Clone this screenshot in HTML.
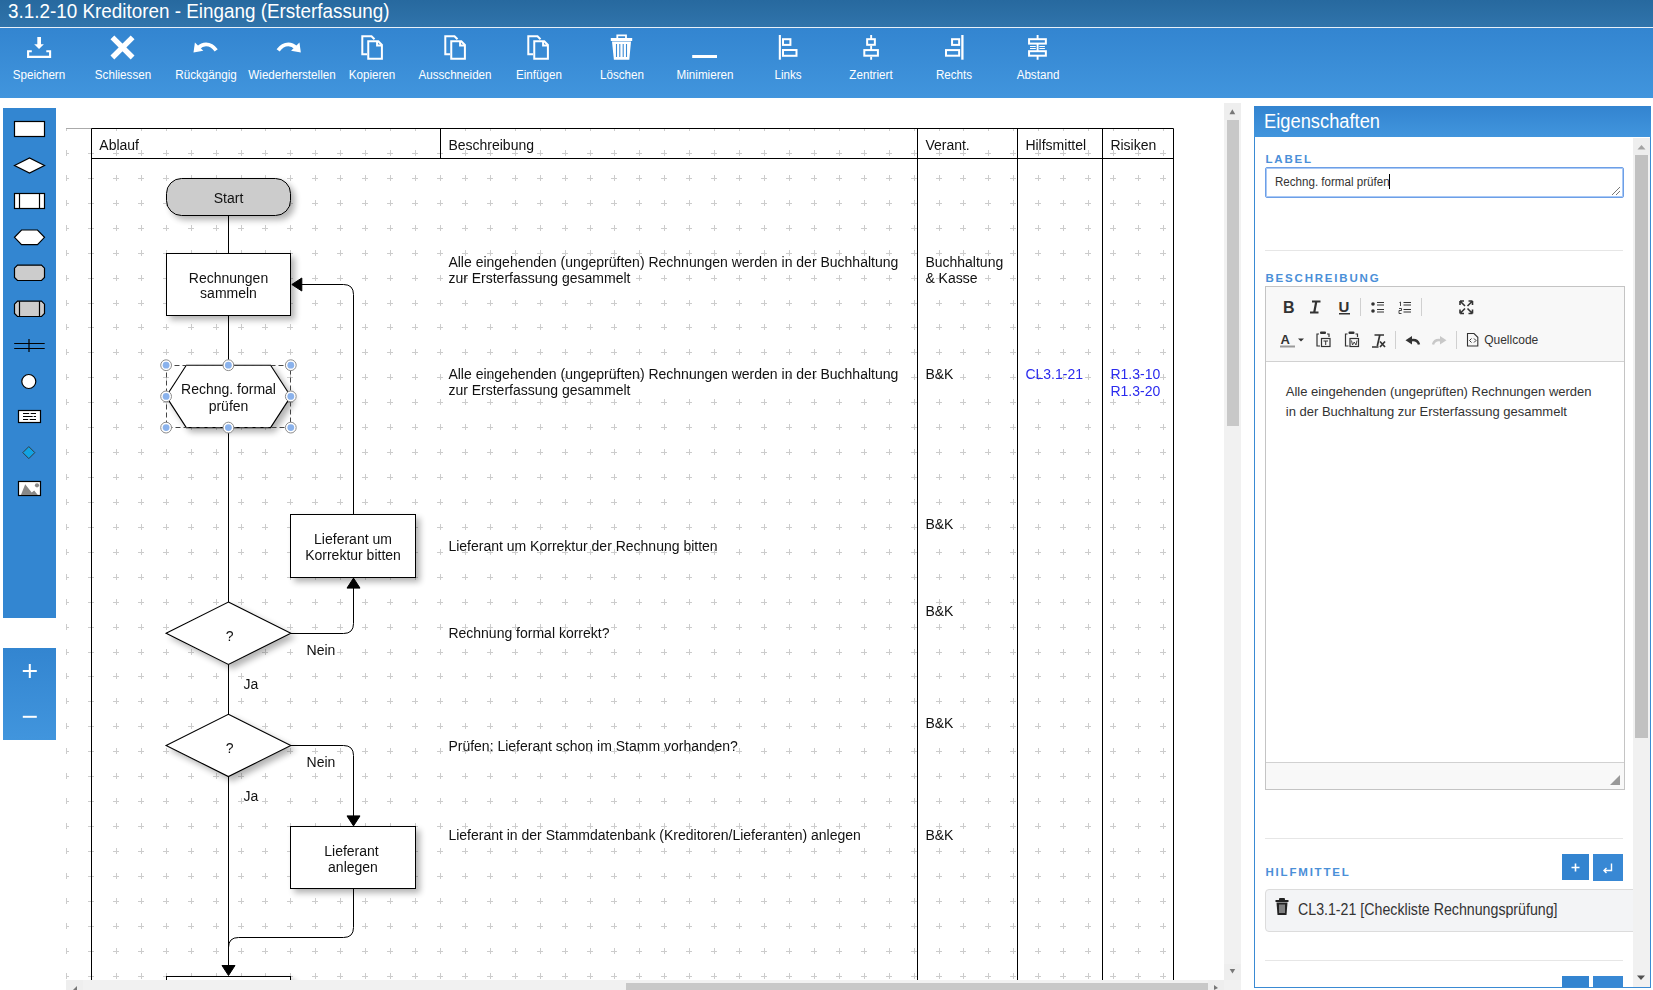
<!DOCTYPE html>
<html><head><meta charset="utf-8">
<style>
html,body{margin:0;padding:0}
body{width:1653px;height:990px;overflow:hidden;position:relative;background:#fff;font-family:"Liberation Sans",sans-serif}
.abs{position:absolute}
#title{left:0;top:0;width:1653px;height:27px;background:linear-gradient(#27699f,#3074ab)}
#title span{position:absolute;left:8px;top:-1px;font-size:20.5px;color:#fff;white-space:nowrap;transform-origin:0 0;transform:scaleX(0.92);line-height:24px}
#tbline{left:0;top:27px;width:1653px;height:1px;background:#e8f0f8}
#toolbar{left:0;top:28px;width:1653px;height:70px;background:linear-gradient(#3385d0,#4195dd)}
.tl{position:absolute;top:40px;font-size:12px;color:#fff;white-space:nowrap;transform:translateX(-50%) scaleX(0.97);line-height:14px}
#palette{left:3px;top:108px;width:53px;height:510px;background:#3386d1}
#zoom{left:3px;top:648px;width:53px;height:92px;background:linear-gradient(#3385d0,#4195dd)}
.vsb{background:#f1f1f1}
#panel{left:1254px;top:106px;width:397px;height:882px;box-sizing:border-box;border:1px solid #3a8ad3;border-top:none;background:#fff;overflow:hidden}
#phead{left:0;top:0;width:397px;height:31px;background:linear-gradient(#3384d0,#4195dd)}
.sect{position:absolute;font-size:11.5px;font-weight:bold;color:#4a8fd8;letter-spacing:1.8px;white-space:nowrap;line-height:14px}
</style></head><body>
<div id="title" class="abs"><span>3.1.2-10 Kreditoren - Eingang (Ersterfassung)</span></div>
<div id="tbline" class="abs"></div>
<div id="toolbar" class="abs">
<svg class="abs" style="left:0;top:0" width="1100" height="40" viewBox="0 28 1100 40" fill="none" stroke="#fff">
 <!-- save -->
 <path d="M39.15 37V45" stroke-width="3.7"/><path d="M34.2 44.2H43.9L39.05 49Z" fill="#fff" stroke="none"/>
 <path d="M31.8 51.2H28.1V56.9H50.1V51.2H46.3" stroke-width="2.1"/>
 <!-- close -->
 <path d="M112.4 37.3L132.6 57.5M132.6 37.3L112.4 57.5" stroke-width="5.4"/>
 <!-- undo -->
 <path d="M216.2 50.3C213.5 46.5 210 44.3 206 44.3C202.5 44.3 200.3 45.8 198.3 47.8" stroke-width="3.8"/><path d="M194.9 42.6L193.5 52.4L203.3 50.7Z" fill="#fff" stroke="none"/>
 <!-- redo -->
 <g transform="translate(494.35 0) scale(-1 1)"><path d="M216.2 50.3C213.5 46.5 210 44.3 206 44.3C202.5 44.3 200.3 45.8 198.3 47.8" stroke-width="3.8"/><path d="M194.9 42.6L193.5 52.4L203.3 50.7Z" fill="#fff" stroke="none"/></g>
 <!-- copy x3 -->
 <g stroke-width="2"><path d="M367 54.2H362.3V36.2H371.5L374.5 39.3"/><path d="M368.25 41.3H378.3L381.9 45V58.7H368.25Z"/><path d="M377.1 41.3V45.5H381.9"/></g>
 <g stroke-width="2" transform="translate(83 0)"><path d="M367 54.2H362.3V36.2H371.5L374.5 39.3"/><path d="M368.25 41.3H378.3L381.9 45V58.7H368.25Z"/><path d="M377.1 41.3V45.5H381.9"/></g>
 <g stroke-width="2" transform="translate(166 0)"><path d="M367 54.2H362.3V36.2H371.5L374.5 39.3"/><path d="M368.25 41.3H378.3L381.9 45V58.7H368.25Z"/><path d="M377.1 41.3V45.5H381.9"/></g>
 <!-- trash -->
 <path d="M610.8 38H632.2V41H610.8Z" fill="#fff" stroke="none"/><path d="M617.3 38.5V35.3H626V38.5" stroke-width="1.8"/>
 <path d="M612 41.5H631L629.3 59.8H613.9Z" fill="#fff" stroke="none"/>
 <path d="M616.5 44V57M619.8 44V57M623.2 44V57M626.5 44V57" stroke="#3a8bd5" stroke-width="1.1"/>
 <!-- minimize -->
 <path d="M692.2 56.5H717" stroke-width="3"/>
 <!-- align left -->
 <path d="M779.85 35V59.7" stroke-width="2.1"/><rect x="783" y="39.2" width="7.4" height="5.7" stroke-width="2"/><rect x="783" y="50" width="13.5" height="5.8" stroke-width="2"/>
 <!-- center -->
 <path d="M871.15 35V39M871.15 45.8V50M871.15 56.7V59.7" stroke-width="1.9"/><rect x="867.15" y="39.2" width="7.7" height="5.6" stroke-width="2"/><rect x="864.3" y="50.1" width="13.6" height="5.6" stroke-width="2"/>
 <!-- right -->
 <path d="M962.4 35V59.7" stroke-width="2.3"/><rect x="952.06" y="39.2" width="7.1" height="5.7" stroke-width="2"/><rect x="946" y="50.1" width="13.15" height="5.6" stroke-width="2"/>
 <!-- abstand -->
 <path d="M1037.6 35V39.2M1037.6 43.6V51.2M1037.6 55.7V59.7" stroke-width="1.9"/><rect x="1029.06" y="39.2" width="16.8" height="4.4" stroke-width="2"/><rect x="1029.06" y="51.2" width="16.8" height="4.5" stroke-width="2"/><path d="M1030 46.5H1035.8M1039.3 46.5H1044.9M1030 48.5H1035.8M1039.3 48.5H1044.9" stroke-width="1.1"/>
</svg>
<div class="tl" style="left:39.1px">Speichern</div>
<div class="tl" style="left:122.5px">Schliessen</div>
<div class="tl" style="left:205.8px">Rückgängig</div>
<div class="tl" style="left:292.3px">Wiederherstellen</div>
<div class="tl" style="left:372.1px">Kopieren</div>
<div class="tl" style="left:455.1px">Ausschneiden</div>
<div class="tl" style="left:538.5px">Einfügen</div>
<div class="tl" style="left:621.8px">Löschen</div>
<div class="tl" style="left:705px">Minimieren</div>
<div class="tl" style="left:788.2px">Links</div>
<div class="tl" style="left:871.2px">Zentriert</div>
<div class="tl" style="left:954.4px">Rechts</div>
<div class="tl" style="left:1037.5px">Abstand</div>
</div>
<div id="palette" class="abs">
<svg width="53" height="510" viewBox="3 108 53 510" class="abs" style="left:0;top:0" stroke="#000" stroke-width="1.2">
 <rect x="14.5" y="121.5" width="30" height="15" fill="#fff"/>
 <path d="M14.5 165.5L29.5 158L44.5 165.5L29.5 173Z" fill="#fff"/>
 <rect x="14.5" y="193.5" width="30" height="15" fill="#fff"/><path d="M19.5 193.5V208.5M39.5 193.5V208.5" fill="none"/>
 <path d="M21.5 230H37.5L44.5 237.3L37.5 244.6H21.5L14.5 237.3Z" fill="#fff"/>
 <path d="M17.5 265.2H41.5L44.5 268.2V277.5L41.5 280.5H17.5L14.5 277.5V268.2Z" fill="#ccc"/>
 <path d="M17.5 301.2H41.5L44.5 304.2V313.5L41.5 316.5H17.5L14.5 313.5V304.2Z" fill="#ccc"/><path d="M19.5 301.2V316.5M39.5 301.2V316.5" fill="none"/>
 <path d="M14.2 343.5H44.7M14.2 348.5H44.7M29 339V352" fill="none"/>
 <circle cx="28.8" cy="381.5" r="7" fill="#fff"/>
 <rect x="18.5" y="410.5" width="22" height="12" fill="#fff"/><path d="M23 413.5H29.2M30.7 413.5H36M23 416.5H32.7M33.7 416.5H36M23 419.5H28.2M29.7 419.5H36" stroke-width="1" fill="none"/>
 <path d="M28.8 446.6L34.8 452.6L28.8 458.6L22.8 452.6Z" fill="#12a3e3" stroke="#333" stroke-width="0.9"/>
 <rect x="18.5" y="481.5" width="22" height="14" fill="#fff"/><path d="M20.9 495L25.2 484.3L31.7 492.4L34.2 490.4L37.8 495Z" fill="#888" stroke="none"/><circle cx="37" cy="485.3" r="2.1" fill="#888" stroke="none"/>
</svg>
</div>
<div id="zoom" class="abs">
<svg width="53" height="92" viewBox="3 648 53 92" class="abs" style="left:0;top:0" stroke="#fff" stroke-width="2">
 <path d="M22.8 671H36.8M29.8 664V678"/><path d="M22.8 716.8H36.8"/>
</svg>
</div>
<svg class="abs" style="left:0;top:0;will-change:transform" width="1653" height="990" viewBox="0 0 1653 990">
<defs><filter id="sh" x="-20%" y="-20%" width="150%" height="160%"><feGaussianBlur in="SourceAlpha" stdDeviation="3"/><feOffset dx="3.5" dy="3.5"/><feComponentTransfer><feFuncA type="linear" slope="0.3"/></feComponentTransfer><feMerge><feMergeNode/><feMergeNode in="SourceGraphic"/></feMerge></filter>
<clipPath id="gc"><rect x="66" y="128" width="1158" height="852"/></clipPath><clipPath id="cc"><rect x="66" y="103" width="1158" height="877"/></clipPath></defs>
<g clip-path="url(#cc)">
<path d="M63 128.5h6M66.5 125v6M88 128.5h6M91.5 125v6M113 128.5h6M116.5 125v6M138 128.5h6M141.5 125v6M163 128.5h6M166.5 125v6M188 128.5h6M191.5 125v6M213 128.5h6M216.5 125v6M238 128.5h6M241.5 125v6M262 128.5h6M265.5 125v6M287 128.5h6M290.5 125v6M312 128.5h6M315.5 125v6M337 128.5h6M340.5 125v6M362 128.5h6M365.5 125v6M387 128.5h6M390.5 125v6M412 128.5h6M415.5 125v6M437 128.5h6M440.5 125v6M462 128.5h6M465.5 125v6M487 128.5h6M490.5 125v6M512 128.5h6M515.5 125v6M537 128.5h6M540.5 125v6M562 128.5h6M565.5 125v6M587 128.5h6M590.5 125v6M611 128.5h6M614.5 125v6M636 128.5h6M639.5 125v6M661 128.5h6M664.5 125v6M686 128.5h6M689.5 125v6M711 128.5h6M714.5 125v6M736 128.5h6M739.5 125v6M761 128.5h6M764.5 125v6M786 128.5h6M789.5 125v6M811 128.5h6M814.5 125v6M836 128.5h6M839.5 125v6M861 128.5h6M864.5 125v6M886 128.5h6M889.5 125v6M911 128.5h6M914.5 125v6M936 128.5h6M939.5 125v6M960 128.5h6M963.5 125v6M985 128.5h6M988.5 125v6M1010 128.5h6M1013.5 125v6M1035 128.5h6M1038.5 125v6M1060 128.5h6M1063.5 125v6M1085 128.5h6M1088.5 125v6M1110 128.5h6M1113.5 125v6M1135 128.5h6M1138.5 125v6M1160 128.5h6M1163.5 125v6M63 153.5h6M66.5 150v6M88 153.5h6M91.5 150v6M113 153.5h6M116.5 150v6M138 153.5h6M141.5 150v6M163 153.5h6M166.5 150v6M188 153.5h6M191.5 150v6M213 153.5h6M216.5 150v6M238 153.5h6M241.5 150v6M262 153.5h6M265.5 150v6M287 153.5h6M290.5 150v6M312 153.5h6M315.5 150v6M337 153.5h6M340.5 150v6M362 153.5h6M365.5 150v6M387 153.5h6M390.5 150v6M412 153.5h6M415.5 150v6M437 153.5h6M440.5 150v6M462 153.5h6M465.5 150v6M487 153.5h6M490.5 150v6M512 153.5h6M515.5 150v6M537 153.5h6M540.5 150v6M562 153.5h6M565.5 150v6M587 153.5h6M590.5 150v6M611 153.5h6M614.5 150v6M636 153.5h6M639.5 150v6M661 153.5h6M664.5 150v6M686 153.5h6M689.5 150v6M711 153.5h6M714.5 150v6M736 153.5h6M739.5 150v6M761 153.5h6M764.5 150v6M786 153.5h6M789.5 150v6M811 153.5h6M814.5 150v6M836 153.5h6M839.5 150v6M861 153.5h6M864.5 150v6M886 153.5h6M889.5 150v6M911 153.5h6M914.5 150v6M936 153.5h6M939.5 150v6M960 153.5h6M963.5 150v6M985 153.5h6M988.5 150v6M1010 153.5h6M1013.5 150v6M1035 153.5h6M1038.5 150v6M1060 153.5h6M1063.5 150v6M1085 153.5h6M1088.5 150v6M1110 153.5h6M1113.5 150v6M1135 153.5h6M1138.5 150v6M1160 153.5h6M1163.5 150v6M63 178.5h6M66.5 175v6M88 178.5h6M91.5 175v6M113 178.5h6M116.5 175v6M138 178.5h6M141.5 175v6M163 178.5h6M166.5 175v6M188 178.5h6M191.5 175v6M213 178.5h6M216.5 175v6M238 178.5h6M241.5 175v6M262 178.5h6M265.5 175v6M287 178.5h6M290.5 175v6M312 178.5h6M315.5 175v6M337 178.5h6M340.5 175v6M362 178.5h6M365.5 175v6M387 178.5h6M390.5 175v6M412 178.5h6M415.5 175v6M437 178.5h6M440.5 175v6M462 178.5h6M465.5 175v6M487 178.5h6M490.5 175v6M512 178.5h6M515.5 175v6M537 178.5h6M540.5 175v6M562 178.5h6M565.5 175v6M587 178.5h6M590.5 175v6M611 178.5h6M614.5 175v6M636 178.5h6M639.5 175v6M661 178.5h6M664.5 175v6M686 178.5h6M689.5 175v6M711 178.5h6M714.5 175v6M736 178.5h6M739.5 175v6M761 178.5h6M764.5 175v6M786 178.5h6M789.5 175v6M811 178.5h6M814.5 175v6M836 178.5h6M839.5 175v6M861 178.5h6M864.5 175v6M886 178.5h6M889.5 175v6M911 178.5h6M914.5 175v6M936 178.5h6M939.5 175v6M960 178.5h6M963.5 175v6M985 178.5h6M988.5 175v6M1010 178.5h6M1013.5 175v6M1035 178.5h6M1038.5 175v6M1060 178.5h6M1063.5 175v6M1085 178.5h6M1088.5 175v6M1110 178.5h6M1113.5 175v6M1135 178.5h6M1138.5 175v6M1160 178.5h6M1163.5 175v6M63 203.5h6M66.5 200v6M88 203.5h6M91.5 200v6M113 203.5h6M116.5 200v6M138 203.5h6M141.5 200v6M163 203.5h6M166.5 200v6M188 203.5h6M191.5 200v6M213 203.5h6M216.5 200v6M238 203.5h6M241.5 200v6M262 203.5h6M265.5 200v6M287 203.5h6M290.5 200v6M312 203.5h6M315.5 200v6M337 203.5h6M340.5 200v6M362 203.5h6M365.5 200v6M387 203.5h6M390.5 200v6M412 203.5h6M415.5 200v6M437 203.5h6M440.5 200v6M462 203.5h6M465.5 200v6M487 203.5h6M490.5 200v6M512 203.5h6M515.5 200v6M537 203.5h6M540.5 200v6M562 203.5h6M565.5 200v6M587 203.5h6M590.5 200v6M611 203.5h6M614.5 200v6M636 203.5h6M639.5 200v6M661 203.5h6M664.5 200v6M686 203.5h6M689.5 200v6M711 203.5h6M714.5 200v6M736 203.5h6M739.5 200v6M761 203.5h6M764.5 200v6M786 203.5h6M789.5 200v6M811 203.5h6M814.5 200v6M836 203.5h6M839.5 200v6M861 203.5h6M864.5 200v6M886 203.5h6M889.5 200v6M911 203.5h6M914.5 200v6M936 203.5h6M939.5 200v6M960 203.5h6M963.5 200v6M985 203.5h6M988.5 200v6M1010 203.5h6M1013.5 200v6M1035 203.5h6M1038.5 200v6M1060 203.5h6M1063.5 200v6M1085 203.5h6M1088.5 200v6M1110 203.5h6M1113.5 200v6M1135 203.5h6M1138.5 200v6M1160 203.5h6M1163.5 200v6M63 228.5h6M66.5 225v6M88 228.5h6M91.5 225v6M113 228.5h6M116.5 225v6M138 228.5h6M141.5 225v6M163 228.5h6M166.5 225v6M188 228.5h6M191.5 225v6M213 228.5h6M216.5 225v6M238 228.5h6M241.5 225v6M262 228.5h6M265.5 225v6M287 228.5h6M290.5 225v6M312 228.5h6M315.5 225v6M337 228.5h6M340.5 225v6M362 228.5h6M365.5 225v6M387 228.5h6M390.5 225v6M412 228.5h6M415.5 225v6M437 228.5h6M440.5 225v6M462 228.5h6M465.5 225v6M487 228.5h6M490.5 225v6M512 228.5h6M515.5 225v6M537 228.5h6M540.5 225v6M562 228.5h6M565.5 225v6M587 228.5h6M590.5 225v6M611 228.5h6M614.5 225v6M636 228.5h6M639.5 225v6M661 228.5h6M664.5 225v6M686 228.5h6M689.5 225v6M711 228.5h6M714.5 225v6M736 228.5h6M739.5 225v6M761 228.5h6M764.5 225v6M786 228.5h6M789.5 225v6M811 228.5h6M814.5 225v6M836 228.5h6M839.5 225v6M861 228.5h6M864.5 225v6M886 228.5h6M889.5 225v6M911 228.5h6M914.5 225v6M936 228.5h6M939.5 225v6M960 228.5h6M963.5 225v6M985 228.5h6M988.5 225v6M1010 228.5h6M1013.5 225v6M1035 228.5h6M1038.5 225v6M1060 228.5h6M1063.5 225v6M1085 228.5h6M1088.5 225v6M1110 228.5h6M1113.5 225v6M1135 228.5h6M1138.5 225v6M1160 228.5h6M1163.5 225v6M63 253.5h6M66.5 250v6M88 253.5h6M91.5 250v6M113 253.5h6M116.5 250v6M138 253.5h6M141.5 250v6M163 253.5h6M166.5 250v6M188 253.5h6M191.5 250v6M213 253.5h6M216.5 250v6M238 253.5h6M241.5 250v6M262 253.5h6M265.5 250v6M287 253.5h6M290.5 250v6M312 253.5h6M315.5 250v6M337 253.5h6M340.5 250v6M362 253.5h6M365.5 250v6M387 253.5h6M390.5 250v6M412 253.5h6M415.5 250v6M437 253.5h6M440.5 250v6M462 253.5h6M465.5 250v6M487 253.5h6M490.5 250v6M512 253.5h6M515.5 250v6M537 253.5h6M540.5 250v6M562 253.5h6M565.5 250v6M587 253.5h6M590.5 250v6M611 253.5h6M614.5 250v6M636 253.5h6M639.5 250v6M661 253.5h6M664.5 250v6M686 253.5h6M689.5 250v6M711 253.5h6M714.5 250v6M736 253.5h6M739.5 250v6M761 253.5h6M764.5 250v6M786 253.5h6M789.5 250v6M811 253.5h6M814.5 250v6M836 253.5h6M839.5 250v6M861 253.5h6M864.5 250v6M886 253.5h6M889.5 250v6M911 253.5h6M914.5 250v6M936 253.5h6M939.5 250v6M960 253.5h6M963.5 250v6M985 253.5h6M988.5 250v6M1010 253.5h6M1013.5 250v6M1035 253.5h6M1038.5 250v6M1060 253.5h6M1063.5 250v6M1085 253.5h6M1088.5 250v6M1110 253.5h6M1113.5 250v6M1135 253.5h6M1138.5 250v6M1160 253.5h6M1163.5 250v6M63 278.5h6M66.5 275v6M88 278.5h6M91.5 275v6M113 278.5h6M116.5 275v6M138 278.5h6M141.5 275v6M163 278.5h6M166.5 275v6M188 278.5h6M191.5 275v6M213 278.5h6M216.5 275v6M238 278.5h6M241.5 275v6M262 278.5h6M265.5 275v6M287 278.5h6M290.5 275v6M312 278.5h6M315.5 275v6M337 278.5h6M340.5 275v6M362 278.5h6M365.5 275v6M387 278.5h6M390.5 275v6M412 278.5h6M415.5 275v6M437 278.5h6M440.5 275v6M462 278.5h6M465.5 275v6M487 278.5h6M490.5 275v6M512 278.5h6M515.5 275v6M537 278.5h6M540.5 275v6M562 278.5h6M565.5 275v6M587 278.5h6M590.5 275v6M611 278.5h6M614.5 275v6M636 278.5h6M639.5 275v6M661 278.5h6M664.5 275v6M686 278.5h6M689.5 275v6M711 278.5h6M714.5 275v6M736 278.5h6M739.5 275v6M761 278.5h6M764.5 275v6M786 278.5h6M789.5 275v6M811 278.5h6M814.5 275v6M836 278.5h6M839.5 275v6M861 278.5h6M864.5 275v6M886 278.5h6M889.5 275v6M911 278.5h6M914.5 275v6M936 278.5h6M939.5 275v6M960 278.5h6M963.5 275v6M985 278.5h6M988.5 275v6M1010 278.5h6M1013.5 275v6M1035 278.5h6M1038.5 275v6M1060 278.5h6M1063.5 275v6M1085 278.5h6M1088.5 275v6M1110 278.5h6M1113.5 275v6M1135 278.5h6M1138.5 275v6M1160 278.5h6M1163.5 275v6M63 303.5h6M66.5 300v6M88 303.5h6M91.5 300v6M113 303.5h6M116.5 300v6M138 303.5h6M141.5 300v6M163 303.5h6M166.5 300v6M188 303.5h6M191.5 300v6M213 303.5h6M216.5 300v6M238 303.5h6M241.5 300v6M262 303.5h6M265.5 300v6M287 303.5h6M290.5 300v6M312 303.5h6M315.5 300v6M337 303.5h6M340.5 300v6M362 303.5h6M365.5 300v6M387 303.5h6M390.5 300v6M412 303.5h6M415.5 300v6M437 303.5h6M440.5 300v6M462 303.5h6M465.5 300v6M487 303.5h6M490.5 300v6M512 303.5h6M515.5 300v6M537 303.5h6M540.5 300v6M562 303.5h6M565.5 300v6M587 303.5h6M590.5 300v6M611 303.5h6M614.5 300v6M636 303.5h6M639.5 300v6M661 303.5h6M664.5 300v6M686 303.5h6M689.5 300v6M711 303.5h6M714.5 300v6M736 303.5h6M739.5 300v6M761 303.5h6M764.5 300v6M786 303.5h6M789.5 300v6M811 303.5h6M814.5 300v6M836 303.5h6M839.5 300v6M861 303.5h6M864.5 300v6M886 303.5h6M889.5 300v6M911 303.5h6M914.5 300v6M936 303.5h6M939.5 300v6M960 303.5h6M963.5 300v6M985 303.5h6M988.5 300v6M1010 303.5h6M1013.5 300v6M1035 303.5h6M1038.5 300v6M1060 303.5h6M1063.5 300v6M1085 303.5h6M1088.5 300v6M1110 303.5h6M1113.5 300v6M1135 303.5h6M1138.5 300v6M1160 303.5h6M1163.5 300v6M63 327.5h6M66.5 324v6M88 327.5h6M91.5 324v6M113 327.5h6M116.5 324v6M138 327.5h6M141.5 324v6M163 327.5h6M166.5 324v6M188 327.5h6M191.5 324v6M213 327.5h6M216.5 324v6M238 327.5h6M241.5 324v6M262 327.5h6M265.5 324v6M287 327.5h6M290.5 324v6M312 327.5h6M315.5 324v6M337 327.5h6M340.5 324v6M362 327.5h6M365.5 324v6M387 327.5h6M390.5 324v6M412 327.5h6M415.5 324v6M437 327.5h6M440.5 324v6M462 327.5h6M465.5 324v6M487 327.5h6M490.5 324v6M512 327.5h6M515.5 324v6M537 327.5h6M540.5 324v6M562 327.5h6M565.5 324v6M587 327.5h6M590.5 324v6M611 327.5h6M614.5 324v6M636 327.5h6M639.5 324v6M661 327.5h6M664.5 324v6M686 327.5h6M689.5 324v6M711 327.5h6M714.5 324v6M736 327.5h6M739.5 324v6M761 327.5h6M764.5 324v6M786 327.5h6M789.5 324v6M811 327.5h6M814.5 324v6M836 327.5h6M839.5 324v6M861 327.5h6M864.5 324v6M886 327.5h6M889.5 324v6M911 327.5h6M914.5 324v6M936 327.5h6M939.5 324v6M960 327.5h6M963.5 324v6M985 327.5h6M988.5 324v6M1010 327.5h6M1013.5 324v6M1035 327.5h6M1038.5 324v6M1060 327.5h6M1063.5 324v6M1085 327.5h6M1088.5 324v6M1110 327.5h6M1113.5 324v6M1135 327.5h6M1138.5 324v6M1160 327.5h6M1163.5 324v6M63 352.5h6M66.5 349v6M88 352.5h6M91.5 349v6M113 352.5h6M116.5 349v6M138 352.5h6M141.5 349v6M163 352.5h6M166.5 349v6M188 352.5h6M191.5 349v6M213 352.5h6M216.5 349v6M238 352.5h6M241.5 349v6M262 352.5h6M265.5 349v6M287 352.5h6M290.5 349v6M312 352.5h6M315.5 349v6M337 352.5h6M340.5 349v6M362 352.5h6M365.5 349v6M387 352.5h6M390.5 349v6M412 352.5h6M415.5 349v6M437 352.5h6M440.5 349v6M462 352.5h6M465.5 349v6M487 352.5h6M490.5 349v6M512 352.5h6M515.5 349v6M537 352.5h6M540.5 349v6M562 352.5h6M565.5 349v6M587 352.5h6M590.5 349v6M611 352.5h6M614.5 349v6M636 352.5h6M639.5 349v6M661 352.5h6M664.5 349v6M686 352.5h6M689.5 349v6M711 352.5h6M714.5 349v6M736 352.5h6M739.5 349v6M761 352.5h6M764.5 349v6M786 352.5h6M789.5 349v6M811 352.5h6M814.5 349v6M836 352.5h6M839.5 349v6M861 352.5h6M864.5 349v6M886 352.5h6M889.5 349v6M911 352.5h6M914.5 349v6M936 352.5h6M939.5 349v6M960 352.5h6M963.5 349v6M985 352.5h6M988.5 349v6M1010 352.5h6M1013.5 349v6M1035 352.5h6M1038.5 349v6M1060 352.5h6M1063.5 349v6M1085 352.5h6M1088.5 349v6M1110 352.5h6M1113.5 349v6M1135 352.5h6M1138.5 349v6M1160 352.5h6M1163.5 349v6M63 377.5h6M66.5 374v6M88 377.5h6M91.5 374v6M113 377.5h6M116.5 374v6M138 377.5h6M141.5 374v6M163 377.5h6M166.5 374v6M188 377.5h6M191.5 374v6M213 377.5h6M216.5 374v6M238 377.5h6M241.5 374v6M262 377.5h6M265.5 374v6M287 377.5h6M290.5 374v6M312 377.5h6M315.5 374v6M337 377.5h6M340.5 374v6M362 377.5h6M365.5 374v6M387 377.5h6M390.5 374v6M412 377.5h6M415.5 374v6M437 377.5h6M440.5 374v6M462 377.5h6M465.5 374v6M487 377.5h6M490.5 374v6M512 377.5h6M515.5 374v6M537 377.5h6M540.5 374v6M562 377.5h6M565.5 374v6M587 377.5h6M590.5 374v6M611 377.5h6M614.5 374v6M636 377.5h6M639.5 374v6M661 377.5h6M664.5 374v6M686 377.5h6M689.5 374v6M711 377.5h6M714.5 374v6M736 377.5h6M739.5 374v6M761 377.5h6M764.5 374v6M786 377.5h6M789.5 374v6M811 377.5h6M814.5 374v6M836 377.5h6M839.5 374v6M861 377.5h6M864.5 374v6M886 377.5h6M889.5 374v6M911 377.5h6M914.5 374v6M936 377.5h6M939.5 374v6M960 377.5h6M963.5 374v6M985 377.5h6M988.5 374v6M1010 377.5h6M1013.5 374v6M1035 377.5h6M1038.5 374v6M1060 377.5h6M1063.5 374v6M1085 377.5h6M1088.5 374v6M1110 377.5h6M1113.5 374v6M1135 377.5h6M1138.5 374v6M1160 377.5h6M1163.5 374v6M63 402.5h6M66.5 399v6M88 402.5h6M91.5 399v6M113 402.5h6M116.5 399v6M138 402.5h6M141.5 399v6M163 402.5h6M166.5 399v6M188 402.5h6M191.5 399v6M213 402.5h6M216.5 399v6M238 402.5h6M241.5 399v6M262 402.5h6M265.5 399v6M287 402.5h6M290.5 399v6M312 402.5h6M315.5 399v6M337 402.5h6M340.5 399v6M362 402.5h6M365.5 399v6M387 402.5h6M390.5 399v6M412 402.5h6M415.5 399v6M437 402.5h6M440.5 399v6M462 402.5h6M465.5 399v6M487 402.5h6M490.5 399v6M512 402.5h6M515.5 399v6M537 402.5h6M540.5 399v6M562 402.5h6M565.5 399v6M587 402.5h6M590.5 399v6M611 402.5h6M614.5 399v6M636 402.5h6M639.5 399v6M661 402.5h6M664.5 399v6M686 402.5h6M689.5 399v6M711 402.5h6M714.5 399v6M736 402.5h6M739.5 399v6M761 402.5h6M764.5 399v6M786 402.5h6M789.5 399v6M811 402.5h6M814.5 399v6M836 402.5h6M839.5 399v6M861 402.5h6M864.5 399v6M886 402.5h6M889.5 399v6M911 402.5h6M914.5 399v6M936 402.5h6M939.5 399v6M960 402.5h6M963.5 399v6M985 402.5h6M988.5 399v6M1010 402.5h6M1013.5 399v6M1035 402.5h6M1038.5 399v6M1060 402.5h6M1063.5 399v6M1085 402.5h6M1088.5 399v6M1110 402.5h6M1113.5 399v6M1135 402.5h6M1138.5 399v6M1160 402.5h6M1163.5 399v6M63 427.5h6M66.5 424v6M88 427.5h6M91.5 424v6M113 427.5h6M116.5 424v6M138 427.5h6M141.5 424v6M163 427.5h6M166.5 424v6M188 427.5h6M191.5 424v6M213 427.5h6M216.5 424v6M238 427.5h6M241.5 424v6M262 427.5h6M265.5 424v6M287 427.5h6M290.5 424v6M312 427.5h6M315.5 424v6M337 427.5h6M340.5 424v6M362 427.5h6M365.5 424v6M387 427.5h6M390.5 424v6M412 427.5h6M415.5 424v6M437 427.5h6M440.5 424v6M462 427.5h6M465.5 424v6M487 427.5h6M490.5 424v6M512 427.5h6M515.5 424v6M537 427.5h6M540.5 424v6M562 427.5h6M565.5 424v6M587 427.5h6M590.5 424v6M611 427.5h6M614.5 424v6M636 427.5h6M639.5 424v6M661 427.5h6M664.5 424v6M686 427.5h6M689.5 424v6M711 427.5h6M714.5 424v6M736 427.5h6M739.5 424v6M761 427.5h6M764.5 424v6M786 427.5h6M789.5 424v6M811 427.5h6M814.5 424v6M836 427.5h6M839.5 424v6M861 427.5h6M864.5 424v6M886 427.5h6M889.5 424v6M911 427.5h6M914.5 424v6M936 427.5h6M939.5 424v6M960 427.5h6M963.5 424v6M985 427.5h6M988.5 424v6M1010 427.5h6M1013.5 424v6M1035 427.5h6M1038.5 424v6M1060 427.5h6M1063.5 424v6M1085 427.5h6M1088.5 424v6M1110 427.5h6M1113.5 424v6M1135 427.5h6M1138.5 424v6M1160 427.5h6M1163.5 424v6M63 452.5h6M66.5 449v6M88 452.5h6M91.5 449v6M113 452.5h6M116.5 449v6M138 452.5h6M141.5 449v6M163 452.5h6M166.5 449v6M188 452.5h6M191.5 449v6M213 452.5h6M216.5 449v6M238 452.5h6M241.5 449v6M262 452.5h6M265.5 449v6M287 452.5h6M290.5 449v6M312 452.5h6M315.5 449v6M337 452.5h6M340.5 449v6M362 452.5h6M365.5 449v6M387 452.5h6M390.5 449v6M412 452.5h6M415.5 449v6M437 452.5h6M440.5 449v6M462 452.5h6M465.5 449v6M487 452.5h6M490.5 449v6M512 452.5h6M515.5 449v6M537 452.5h6M540.5 449v6M562 452.5h6M565.5 449v6M587 452.5h6M590.5 449v6M611 452.5h6M614.5 449v6M636 452.5h6M639.5 449v6M661 452.5h6M664.5 449v6M686 452.5h6M689.5 449v6M711 452.5h6M714.5 449v6M736 452.5h6M739.5 449v6M761 452.5h6M764.5 449v6M786 452.5h6M789.5 449v6M811 452.5h6M814.5 449v6M836 452.5h6M839.5 449v6M861 452.5h6M864.5 449v6M886 452.5h6M889.5 449v6M911 452.5h6M914.5 449v6M936 452.5h6M939.5 449v6M960 452.5h6M963.5 449v6M985 452.5h6M988.5 449v6M1010 452.5h6M1013.5 449v6M1035 452.5h6M1038.5 449v6M1060 452.5h6M1063.5 449v6M1085 452.5h6M1088.5 449v6M1110 452.5h6M1113.5 449v6M1135 452.5h6M1138.5 449v6M1160 452.5h6M1163.5 449v6M63 477.5h6M66.5 474v6M88 477.5h6M91.5 474v6M113 477.5h6M116.5 474v6M138 477.5h6M141.5 474v6M163 477.5h6M166.5 474v6M188 477.5h6M191.5 474v6M213 477.5h6M216.5 474v6M238 477.5h6M241.5 474v6M262 477.5h6M265.5 474v6M287 477.5h6M290.5 474v6M312 477.5h6M315.5 474v6M337 477.5h6M340.5 474v6M362 477.5h6M365.5 474v6M387 477.5h6M390.5 474v6M412 477.5h6M415.5 474v6M437 477.5h6M440.5 474v6M462 477.5h6M465.5 474v6M487 477.5h6M490.5 474v6M512 477.5h6M515.5 474v6M537 477.5h6M540.5 474v6M562 477.5h6M565.5 474v6M587 477.5h6M590.5 474v6M611 477.5h6M614.5 474v6M636 477.5h6M639.5 474v6M661 477.5h6M664.5 474v6M686 477.5h6M689.5 474v6M711 477.5h6M714.5 474v6M736 477.5h6M739.5 474v6M761 477.5h6M764.5 474v6M786 477.5h6M789.5 474v6M811 477.5h6M814.5 474v6M836 477.5h6M839.5 474v6M861 477.5h6M864.5 474v6M886 477.5h6M889.5 474v6M911 477.5h6M914.5 474v6M936 477.5h6M939.5 474v6M960 477.5h6M963.5 474v6M985 477.5h6M988.5 474v6M1010 477.5h6M1013.5 474v6M1035 477.5h6M1038.5 474v6M1060 477.5h6M1063.5 474v6M1085 477.5h6M1088.5 474v6M1110 477.5h6M1113.5 474v6M1135 477.5h6M1138.5 474v6M1160 477.5h6M1163.5 474v6M63 502.5h6M66.5 499v6M88 502.5h6M91.5 499v6M113 502.5h6M116.5 499v6M138 502.5h6M141.5 499v6M163 502.5h6M166.5 499v6M188 502.5h6M191.5 499v6M213 502.5h6M216.5 499v6M238 502.5h6M241.5 499v6M262 502.5h6M265.5 499v6M287 502.5h6M290.5 499v6M312 502.5h6M315.5 499v6M337 502.5h6M340.5 499v6M362 502.5h6M365.5 499v6M387 502.5h6M390.5 499v6M412 502.5h6M415.5 499v6M437 502.5h6M440.5 499v6M462 502.5h6M465.5 499v6M487 502.5h6M490.5 499v6M512 502.5h6M515.5 499v6M537 502.5h6M540.5 499v6M562 502.5h6M565.5 499v6M587 502.5h6M590.5 499v6M611 502.5h6M614.5 499v6M636 502.5h6M639.5 499v6M661 502.5h6M664.5 499v6M686 502.5h6M689.5 499v6M711 502.5h6M714.5 499v6M736 502.5h6M739.5 499v6M761 502.5h6M764.5 499v6M786 502.5h6M789.5 499v6M811 502.5h6M814.5 499v6M836 502.5h6M839.5 499v6M861 502.5h6M864.5 499v6M886 502.5h6M889.5 499v6M911 502.5h6M914.5 499v6M936 502.5h6M939.5 499v6M960 502.5h6M963.5 499v6M985 502.5h6M988.5 499v6M1010 502.5h6M1013.5 499v6M1035 502.5h6M1038.5 499v6M1060 502.5h6M1063.5 499v6M1085 502.5h6M1088.5 499v6M1110 502.5h6M1113.5 499v6M1135 502.5h6M1138.5 499v6M1160 502.5h6M1163.5 499v6M63 527.5h6M66.5 524v6M88 527.5h6M91.5 524v6M113 527.5h6M116.5 524v6M138 527.5h6M141.5 524v6M163 527.5h6M166.5 524v6M188 527.5h6M191.5 524v6M213 527.5h6M216.5 524v6M238 527.5h6M241.5 524v6M262 527.5h6M265.5 524v6M287 527.5h6M290.5 524v6M312 527.5h6M315.5 524v6M337 527.5h6M340.5 524v6M362 527.5h6M365.5 524v6M387 527.5h6M390.5 524v6M412 527.5h6M415.5 524v6M437 527.5h6M440.5 524v6M462 527.5h6M465.5 524v6M487 527.5h6M490.5 524v6M512 527.5h6M515.5 524v6M537 527.5h6M540.5 524v6M562 527.5h6M565.5 524v6M587 527.5h6M590.5 524v6M611 527.5h6M614.5 524v6M636 527.5h6M639.5 524v6M661 527.5h6M664.5 524v6M686 527.5h6M689.5 524v6M711 527.5h6M714.5 524v6M736 527.5h6M739.5 524v6M761 527.5h6M764.5 524v6M786 527.5h6M789.5 524v6M811 527.5h6M814.5 524v6M836 527.5h6M839.5 524v6M861 527.5h6M864.5 524v6M886 527.5h6M889.5 524v6M911 527.5h6M914.5 524v6M936 527.5h6M939.5 524v6M960 527.5h6M963.5 524v6M985 527.5h6M988.5 524v6M1010 527.5h6M1013.5 524v6M1035 527.5h6M1038.5 524v6M1060 527.5h6M1063.5 524v6M1085 527.5h6M1088.5 524v6M1110 527.5h6M1113.5 524v6M1135 527.5h6M1138.5 524v6M1160 527.5h6M1163.5 524v6M63 552.5h6M66.5 549v6M88 552.5h6M91.5 549v6M113 552.5h6M116.5 549v6M138 552.5h6M141.5 549v6M163 552.5h6M166.5 549v6M188 552.5h6M191.5 549v6M213 552.5h6M216.5 549v6M238 552.5h6M241.5 549v6M262 552.5h6M265.5 549v6M287 552.5h6M290.5 549v6M312 552.5h6M315.5 549v6M337 552.5h6M340.5 549v6M362 552.5h6M365.5 549v6M387 552.5h6M390.5 549v6M412 552.5h6M415.5 549v6M437 552.5h6M440.5 549v6M462 552.5h6M465.5 549v6M487 552.5h6M490.5 549v6M512 552.5h6M515.5 549v6M537 552.5h6M540.5 549v6M562 552.5h6M565.5 549v6M587 552.5h6M590.5 549v6M611 552.5h6M614.5 549v6M636 552.5h6M639.5 549v6M661 552.5h6M664.5 549v6M686 552.5h6M689.5 549v6M711 552.5h6M714.5 549v6M736 552.5h6M739.5 549v6M761 552.5h6M764.5 549v6M786 552.5h6M789.5 549v6M811 552.5h6M814.5 549v6M836 552.5h6M839.5 549v6M861 552.5h6M864.5 549v6M886 552.5h6M889.5 549v6M911 552.5h6M914.5 549v6M936 552.5h6M939.5 549v6M960 552.5h6M963.5 549v6M985 552.5h6M988.5 549v6M1010 552.5h6M1013.5 549v6M1035 552.5h6M1038.5 549v6M1060 552.5h6M1063.5 549v6M1085 552.5h6M1088.5 549v6M1110 552.5h6M1113.5 549v6M1135 552.5h6M1138.5 549v6M1160 552.5h6M1163.5 549v6M63 577.5h6M66.5 574v6M88 577.5h6M91.5 574v6M113 577.5h6M116.5 574v6M138 577.5h6M141.5 574v6M163 577.5h6M166.5 574v6M188 577.5h6M191.5 574v6M213 577.5h6M216.5 574v6M238 577.5h6M241.5 574v6M262 577.5h6M265.5 574v6M287 577.5h6M290.5 574v6M312 577.5h6M315.5 574v6M337 577.5h6M340.5 574v6M362 577.5h6M365.5 574v6M387 577.5h6M390.5 574v6M412 577.5h6M415.5 574v6M437 577.5h6M440.5 574v6M462 577.5h6M465.5 574v6M487 577.5h6M490.5 574v6M512 577.5h6M515.5 574v6M537 577.5h6M540.5 574v6M562 577.5h6M565.5 574v6M587 577.5h6M590.5 574v6M611 577.5h6M614.5 574v6M636 577.5h6M639.5 574v6M661 577.5h6M664.5 574v6M686 577.5h6M689.5 574v6M711 577.5h6M714.5 574v6M736 577.5h6M739.5 574v6M761 577.5h6M764.5 574v6M786 577.5h6M789.5 574v6M811 577.5h6M814.5 574v6M836 577.5h6M839.5 574v6M861 577.5h6M864.5 574v6M886 577.5h6M889.5 574v6M911 577.5h6M914.5 574v6M936 577.5h6M939.5 574v6M960 577.5h6M963.5 574v6M985 577.5h6M988.5 574v6M1010 577.5h6M1013.5 574v6M1035 577.5h6M1038.5 574v6M1060 577.5h6M1063.5 574v6M1085 577.5h6M1088.5 574v6M1110 577.5h6M1113.5 574v6M1135 577.5h6M1138.5 574v6M1160 577.5h6M1163.5 574v6M63 602.5h6M66.5 599v6M88 602.5h6M91.5 599v6M113 602.5h6M116.5 599v6M138 602.5h6M141.5 599v6M163 602.5h6M166.5 599v6M188 602.5h6M191.5 599v6M213 602.5h6M216.5 599v6M238 602.5h6M241.5 599v6M262 602.5h6M265.5 599v6M287 602.5h6M290.5 599v6M312 602.5h6M315.5 599v6M337 602.5h6M340.5 599v6M362 602.5h6M365.5 599v6M387 602.5h6M390.5 599v6M412 602.5h6M415.5 599v6M437 602.5h6M440.5 599v6M462 602.5h6M465.5 599v6M487 602.5h6M490.5 599v6M512 602.5h6M515.5 599v6M537 602.5h6M540.5 599v6M562 602.5h6M565.5 599v6M587 602.5h6M590.5 599v6M611 602.5h6M614.5 599v6M636 602.5h6M639.5 599v6M661 602.5h6M664.5 599v6M686 602.5h6M689.5 599v6M711 602.5h6M714.5 599v6M736 602.5h6M739.5 599v6M761 602.5h6M764.5 599v6M786 602.5h6M789.5 599v6M811 602.5h6M814.5 599v6M836 602.5h6M839.5 599v6M861 602.5h6M864.5 599v6M886 602.5h6M889.5 599v6M911 602.5h6M914.5 599v6M936 602.5h6M939.5 599v6M960 602.5h6M963.5 599v6M985 602.5h6M988.5 599v6M1010 602.5h6M1013.5 599v6M1035 602.5h6M1038.5 599v6M1060 602.5h6M1063.5 599v6M1085 602.5h6M1088.5 599v6M1110 602.5h6M1113.5 599v6M1135 602.5h6M1138.5 599v6M1160 602.5h6M1163.5 599v6M63 627.5h6M66.5 624v6M88 627.5h6M91.5 624v6M113 627.5h6M116.5 624v6M138 627.5h6M141.5 624v6M163 627.5h6M166.5 624v6M188 627.5h6M191.5 624v6M213 627.5h6M216.5 624v6M238 627.5h6M241.5 624v6M262 627.5h6M265.5 624v6M287 627.5h6M290.5 624v6M312 627.5h6M315.5 624v6M337 627.5h6M340.5 624v6M362 627.5h6M365.5 624v6M387 627.5h6M390.5 624v6M412 627.5h6M415.5 624v6M437 627.5h6M440.5 624v6M462 627.5h6M465.5 624v6M487 627.5h6M490.5 624v6M512 627.5h6M515.5 624v6M537 627.5h6M540.5 624v6M562 627.5h6M565.5 624v6M587 627.5h6M590.5 624v6M611 627.5h6M614.5 624v6M636 627.5h6M639.5 624v6M661 627.5h6M664.5 624v6M686 627.5h6M689.5 624v6M711 627.5h6M714.5 624v6M736 627.5h6M739.5 624v6M761 627.5h6M764.5 624v6M786 627.5h6M789.5 624v6M811 627.5h6M814.5 624v6M836 627.5h6M839.5 624v6M861 627.5h6M864.5 624v6M886 627.5h6M889.5 624v6M911 627.5h6M914.5 624v6M936 627.5h6M939.5 624v6M960 627.5h6M963.5 624v6M985 627.5h6M988.5 624v6M1010 627.5h6M1013.5 624v6M1035 627.5h6M1038.5 624v6M1060 627.5h6M1063.5 624v6M1085 627.5h6M1088.5 624v6M1110 627.5h6M1113.5 624v6M1135 627.5h6M1138.5 624v6M1160 627.5h6M1163.5 624v6M63 652.5h6M66.5 649v6M88 652.5h6M91.5 649v6M113 652.5h6M116.5 649v6M138 652.5h6M141.5 649v6M163 652.5h6M166.5 649v6M188 652.5h6M191.5 649v6M213 652.5h6M216.5 649v6M238 652.5h6M241.5 649v6M262 652.5h6M265.5 649v6M287 652.5h6M290.5 649v6M312 652.5h6M315.5 649v6M337 652.5h6M340.5 649v6M362 652.5h6M365.5 649v6M387 652.5h6M390.5 649v6M412 652.5h6M415.5 649v6M437 652.5h6M440.5 649v6M462 652.5h6M465.5 649v6M487 652.5h6M490.5 649v6M512 652.5h6M515.5 649v6M537 652.5h6M540.5 649v6M562 652.5h6M565.5 649v6M587 652.5h6M590.5 649v6M611 652.5h6M614.5 649v6M636 652.5h6M639.5 649v6M661 652.5h6M664.5 649v6M686 652.5h6M689.5 649v6M711 652.5h6M714.5 649v6M736 652.5h6M739.5 649v6M761 652.5h6M764.5 649v6M786 652.5h6M789.5 649v6M811 652.5h6M814.5 649v6M836 652.5h6M839.5 649v6M861 652.5h6M864.5 649v6M886 652.5h6M889.5 649v6M911 652.5h6M914.5 649v6M936 652.5h6M939.5 649v6M960 652.5h6M963.5 649v6M985 652.5h6M988.5 649v6M1010 652.5h6M1013.5 649v6M1035 652.5h6M1038.5 649v6M1060 652.5h6M1063.5 649v6M1085 652.5h6M1088.5 649v6M1110 652.5h6M1113.5 649v6M1135 652.5h6M1138.5 649v6M1160 652.5h6M1163.5 649v6M63 676.5h6M66.5 673v6M88 676.5h6M91.5 673v6M113 676.5h6M116.5 673v6M138 676.5h6M141.5 673v6M163 676.5h6M166.5 673v6M188 676.5h6M191.5 673v6M213 676.5h6M216.5 673v6M238 676.5h6M241.5 673v6M262 676.5h6M265.5 673v6M287 676.5h6M290.5 673v6M312 676.5h6M315.5 673v6M337 676.5h6M340.5 673v6M362 676.5h6M365.5 673v6M387 676.5h6M390.5 673v6M412 676.5h6M415.5 673v6M437 676.5h6M440.5 673v6M462 676.5h6M465.5 673v6M487 676.5h6M490.5 673v6M512 676.5h6M515.5 673v6M537 676.5h6M540.5 673v6M562 676.5h6M565.5 673v6M587 676.5h6M590.5 673v6M611 676.5h6M614.5 673v6M636 676.5h6M639.5 673v6M661 676.5h6M664.5 673v6M686 676.5h6M689.5 673v6M711 676.5h6M714.5 673v6M736 676.5h6M739.5 673v6M761 676.5h6M764.5 673v6M786 676.5h6M789.5 673v6M811 676.5h6M814.5 673v6M836 676.5h6M839.5 673v6M861 676.5h6M864.5 673v6M886 676.5h6M889.5 673v6M911 676.5h6M914.5 673v6M936 676.5h6M939.5 673v6M960 676.5h6M963.5 673v6M985 676.5h6M988.5 673v6M1010 676.5h6M1013.5 673v6M1035 676.5h6M1038.5 673v6M1060 676.5h6M1063.5 673v6M1085 676.5h6M1088.5 673v6M1110 676.5h6M1113.5 673v6M1135 676.5h6M1138.5 673v6M1160 676.5h6M1163.5 673v6M63 701.5h6M66.5 698v6M88 701.5h6M91.5 698v6M113 701.5h6M116.5 698v6M138 701.5h6M141.5 698v6M163 701.5h6M166.5 698v6M188 701.5h6M191.5 698v6M213 701.5h6M216.5 698v6M238 701.5h6M241.5 698v6M262 701.5h6M265.5 698v6M287 701.5h6M290.5 698v6M312 701.5h6M315.5 698v6M337 701.5h6M340.5 698v6M362 701.5h6M365.5 698v6M387 701.5h6M390.5 698v6M412 701.5h6M415.5 698v6M437 701.5h6M440.5 698v6M462 701.5h6M465.5 698v6M487 701.5h6M490.5 698v6M512 701.5h6M515.5 698v6M537 701.5h6M540.5 698v6M562 701.5h6M565.5 698v6M587 701.5h6M590.5 698v6M611 701.5h6M614.5 698v6M636 701.5h6M639.5 698v6M661 701.5h6M664.5 698v6M686 701.5h6M689.5 698v6M711 701.5h6M714.5 698v6M736 701.5h6M739.5 698v6M761 701.5h6M764.5 698v6M786 701.5h6M789.5 698v6M811 701.5h6M814.5 698v6M836 701.5h6M839.5 698v6M861 701.5h6M864.5 698v6M886 701.5h6M889.5 698v6M911 701.5h6M914.5 698v6M936 701.5h6M939.5 698v6M960 701.5h6M963.5 698v6M985 701.5h6M988.5 698v6M1010 701.5h6M1013.5 698v6M1035 701.5h6M1038.5 698v6M1060 701.5h6M1063.5 698v6M1085 701.5h6M1088.5 698v6M1110 701.5h6M1113.5 698v6M1135 701.5h6M1138.5 698v6M1160 701.5h6M1163.5 698v6M63 726.5h6M66.5 723v6M88 726.5h6M91.5 723v6M113 726.5h6M116.5 723v6M138 726.5h6M141.5 723v6M163 726.5h6M166.5 723v6M188 726.5h6M191.5 723v6M213 726.5h6M216.5 723v6M238 726.5h6M241.5 723v6M262 726.5h6M265.5 723v6M287 726.5h6M290.5 723v6M312 726.5h6M315.5 723v6M337 726.5h6M340.5 723v6M362 726.5h6M365.5 723v6M387 726.5h6M390.5 723v6M412 726.5h6M415.5 723v6M437 726.5h6M440.5 723v6M462 726.5h6M465.5 723v6M487 726.5h6M490.5 723v6M512 726.5h6M515.5 723v6M537 726.5h6M540.5 723v6M562 726.5h6M565.5 723v6M587 726.5h6M590.5 723v6M611 726.5h6M614.5 723v6M636 726.5h6M639.5 723v6M661 726.5h6M664.5 723v6M686 726.5h6M689.5 723v6M711 726.5h6M714.5 723v6M736 726.5h6M739.5 723v6M761 726.5h6M764.5 723v6M786 726.5h6M789.5 723v6M811 726.5h6M814.5 723v6M836 726.5h6M839.5 723v6M861 726.5h6M864.5 723v6M886 726.5h6M889.5 723v6M911 726.5h6M914.5 723v6M936 726.5h6M939.5 723v6M960 726.5h6M963.5 723v6M985 726.5h6M988.5 723v6M1010 726.5h6M1013.5 723v6M1035 726.5h6M1038.5 723v6M1060 726.5h6M1063.5 723v6M1085 726.5h6M1088.5 723v6M1110 726.5h6M1113.5 723v6M1135 726.5h6M1138.5 723v6M1160 726.5h6M1163.5 723v6M63 751.5h6M66.5 748v6M88 751.5h6M91.5 748v6M113 751.5h6M116.5 748v6M138 751.5h6M141.5 748v6M163 751.5h6M166.5 748v6M188 751.5h6M191.5 748v6M213 751.5h6M216.5 748v6M238 751.5h6M241.5 748v6M262 751.5h6M265.5 748v6M287 751.5h6M290.5 748v6M312 751.5h6M315.5 748v6M337 751.5h6M340.5 748v6M362 751.5h6M365.5 748v6M387 751.5h6M390.5 748v6M412 751.5h6M415.5 748v6M437 751.5h6M440.5 748v6M462 751.5h6M465.5 748v6M487 751.5h6M490.5 748v6M512 751.5h6M515.5 748v6M537 751.5h6M540.5 748v6M562 751.5h6M565.5 748v6M587 751.5h6M590.5 748v6M611 751.5h6M614.5 748v6M636 751.5h6M639.5 748v6M661 751.5h6M664.5 748v6M686 751.5h6M689.5 748v6M711 751.5h6M714.5 748v6M736 751.5h6M739.5 748v6M761 751.5h6M764.5 748v6M786 751.5h6M789.5 748v6M811 751.5h6M814.5 748v6M836 751.5h6M839.5 748v6M861 751.5h6M864.5 748v6M886 751.5h6M889.5 748v6M911 751.5h6M914.5 748v6M936 751.5h6M939.5 748v6M960 751.5h6M963.5 748v6M985 751.5h6M988.5 748v6M1010 751.5h6M1013.5 748v6M1035 751.5h6M1038.5 748v6M1060 751.5h6M1063.5 748v6M1085 751.5h6M1088.5 748v6M1110 751.5h6M1113.5 748v6M1135 751.5h6M1138.5 748v6M1160 751.5h6M1163.5 748v6M63 776.5h6M66.5 773v6M88 776.5h6M91.5 773v6M113 776.5h6M116.5 773v6M138 776.5h6M141.5 773v6M163 776.5h6M166.5 773v6M188 776.5h6M191.5 773v6M213 776.5h6M216.5 773v6M238 776.5h6M241.5 773v6M262 776.5h6M265.5 773v6M287 776.5h6M290.5 773v6M312 776.5h6M315.5 773v6M337 776.5h6M340.5 773v6M362 776.5h6M365.5 773v6M387 776.5h6M390.5 773v6M412 776.5h6M415.5 773v6M437 776.5h6M440.5 773v6M462 776.5h6M465.5 773v6M487 776.5h6M490.5 773v6M512 776.5h6M515.5 773v6M537 776.5h6M540.5 773v6M562 776.5h6M565.5 773v6M587 776.5h6M590.5 773v6M611 776.5h6M614.5 773v6M636 776.5h6M639.5 773v6M661 776.5h6M664.5 773v6M686 776.5h6M689.5 773v6M711 776.5h6M714.5 773v6M736 776.5h6M739.5 773v6M761 776.5h6M764.5 773v6M786 776.5h6M789.5 773v6M811 776.5h6M814.5 773v6M836 776.5h6M839.5 773v6M861 776.5h6M864.5 773v6M886 776.5h6M889.5 773v6M911 776.5h6M914.5 773v6M936 776.5h6M939.5 773v6M960 776.5h6M963.5 773v6M985 776.5h6M988.5 773v6M1010 776.5h6M1013.5 773v6M1035 776.5h6M1038.5 773v6M1060 776.5h6M1063.5 773v6M1085 776.5h6M1088.5 773v6M1110 776.5h6M1113.5 773v6M1135 776.5h6M1138.5 773v6M1160 776.5h6M1163.5 773v6M63 801.5h6M66.5 798v6M88 801.5h6M91.5 798v6M113 801.5h6M116.5 798v6M138 801.5h6M141.5 798v6M163 801.5h6M166.5 798v6M188 801.5h6M191.5 798v6M213 801.5h6M216.5 798v6M238 801.5h6M241.5 798v6M262 801.5h6M265.5 798v6M287 801.5h6M290.5 798v6M312 801.5h6M315.5 798v6M337 801.5h6M340.5 798v6M362 801.5h6M365.5 798v6M387 801.5h6M390.5 798v6M412 801.5h6M415.5 798v6M437 801.5h6M440.5 798v6M462 801.5h6M465.5 798v6M487 801.5h6M490.5 798v6M512 801.5h6M515.5 798v6M537 801.5h6M540.5 798v6M562 801.5h6M565.5 798v6M587 801.5h6M590.5 798v6M611 801.5h6M614.5 798v6M636 801.5h6M639.5 798v6M661 801.5h6M664.5 798v6M686 801.5h6M689.5 798v6M711 801.5h6M714.5 798v6M736 801.5h6M739.5 798v6M761 801.5h6M764.5 798v6M786 801.5h6M789.5 798v6M811 801.5h6M814.5 798v6M836 801.5h6M839.5 798v6M861 801.5h6M864.5 798v6M886 801.5h6M889.5 798v6M911 801.5h6M914.5 798v6M936 801.5h6M939.5 798v6M960 801.5h6M963.5 798v6M985 801.5h6M988.5 798v6M1010 801.5h6M1013.5 798v6M1035 801.5h6M1038.5 798v6M1060 801.5h6M1063.5 798v6M1085 801.5h6M1088.5 798v6M1110 801.5h6M1113.5 798v6M1135 801.5h6M1138.5 798v6M1160 801.5h6M1163.5 798v6M63 826.5h6M66.5 823v6M88 826.5h6M91.5 823v6M113 826.5h6M116.5 823v6M138 826.5h6M141.5 823v6M163 826.5h6M166.5 823v6M188 826.5h6M191.5 823v6M213 826.5h6M216.5 823v6M238 826.5h6M241.5 823v6M262 826.5h6M265.5 823v6M287 826.5h6M290.5 823v6M312 826.5h6M315.5 823v6M337 826.5h6M340.5 823v6M362 826.5h6M365.5 823v6M387 826.5h6M390.5 823v6M412 826.5h6M415.5 823v6M437 826.5h6M440.5 823v6M462 826.5h6M465.5 823v6M487 826.5h6M490.5 823v6M512 826.5h6M515.5 823v6M537 826.5h6M540.5 823v6M562 826.5h6M565.5 823v6M587 826.5h6M590.5 823v6M611 826.5h6M614.5 823v6M636 826.5h6M639.5 823v6M661 826.5h6M664.5 823v6M686 826.5h6M689.5 823v6M711 826.5h6M714.5 823v6M736 826.5h6M739.5 823v6M761 826.5h6M764.5 823v6M786 826.5h6M789.5 823v6M811 826.5h6M814.5 823v6M836 826.5h6M839.5 823v6M861 826.5h6M864.5 823v6M886 826.5h6M889.5 823v6M911 826.5h6M914.5 823v6M936 826.5h6M939.5 823v6M960 826.5h6M963.5 823v6M985 826.5h6M988.5 823v6M1010 826.5h6M1013.5 823v6M1035 826.5h6M1038.5 823v6M1060 826.5h6M1063.5 823v6M1085 826.5h6M1088.5 823v6M1110 826.5h6M1113.5 823v6M1135 826.5h6M1138.5 823v6M1160 826.5h6M1163.5 823v6M63 851.5h6M66.5 848v6M88 851.5h6M91.5 848v6M113 851.5h6M116.5 848v6M138 851.5h6M141.5 848v6M163 851.5h6M166.5 848v6M188 851.5h6M191.5 848v6M213 851.5h6M216.5 848v6M238 851.5h6M241.5 848v6M262 851.5h6M265.5 848v6M287 851.5h6M290.5 848v6M312 851.5h6M315.5 848v6M337 851.5h6M340.5 848v6M362 851.5h6M365.5 848v6M387 851.5h6M390.5 848v6M412 851.5h6M415.5 848v6M437 851.5h6M440.5 848v6M462 851.5h6M465.5 848v6M487 851.5h6M490.5 848v6M512 851.5h6M515.5 848v6M537 851.5h6M540.5 848v6M562 851.5h6M565.5 848v6M587 851.5h6M590.5 848v6M611 851.5h6M614.5 848v6M636 851.5h6M639.5 848v6M661 851.5h6M664.5 848v6M686 851.5h6M689.5 848v6M711 851.5h6M714.5 848v6M736 851.5h6M739.5 848v6M761 851.5h6M764.5 848v6M786 851.5h6M789.5 848v6M811 851.5h6M814.5 848v6M836 851.5h6M839.5 848v6M861 851.5h6M864.5 848v6M886 851.5h6M889.5 848v6M911 851.5h6M914.5 848v6M936 851.5h6M939.5 848v6M960 851.5h6M963.5 848v6M985 851.5h6M988.5 848v6M1010 851.5h6M1013.5 848v6M1035 851.5h6M1038.5 848v6M1060 851.5h6M1063.5 848v6M1085 851.5h6M1088.5 848v6M1110 851.5h6M1113.5 848v6M1135 851.5h6M1138.5 848v6M1160 851.5h6M1163.5 848v6M63 876.5h6M66.5 873v6M88 876.5h6M91.5 873v6M113 876.5h6M116.5 873v6M138 876.5h6M141.5 873v6M163 876.5h6M166.5 873v6M188 876.5h6M191.5 873v6M213 876.5h6M216.5 873v6M238 876.5h6M241.5 873v6M262 876.5h6M265.5 873v6M287 876.5h6M290.5 873v6M312 876.5h6M315.5 873v6M337 876.5h6M340.5 873v6M362 876.5h6M365.5 873v6M387 876.5h6M390.5 873v6M412 876.5h6M415.5 873v6M437 876.5h6M440.5 873v6M462 876.5h6M465.5 873v6M487 876.5h6M490.5 873v6M512 876.5h6M515.5 873v6M537 876.5h6M540.5 873v6M562 876.5h6M565.5 873v6M587 876.5h6M590.5 873v6M611 876.5h6M614.5 873v6M636 876.5h6M639.5 873v6M661 876.5h6M664.5 873v6M686 876.5h6M689.5 873v6M711 876.5h6M714.5 873v6M736 876.5h6M739.5 873v6M761 876.5h6M764.5 873v6M786 876.5h6M789.5 873v6M811 876.5h6M814.5 873v6M836 876.5h6M839.5 873v6M861 876.5h6M864.5 873v6M886 876.5h6M889.5 873v6M911 876.5h6M914.5 873v6M936 876.5h6M939.5 873v6M960 876.5h6M963.5 873v6M985 876.5h6M988.5 873v6M1010 876.5h6M1013.5 873v6M1035 876.5h6M1038.5 873v6M1060 876.5h6M1063.5 873v6M1085 876.5h6M1088.5 873v6M1110 876.5h6M1113.5 873v6M1135 876.5h6M1138.5 873v6M1160 876.5h6M1163.5 873v6M63 901.5h6M66.5 898v6M88 901.5h6M91.5 898v6M113 901.5h6M116.5 898v6M138 901.5h6M141.5 898v6M163 901.5h6M166.5 898v6M188 901.5h6M191.5 898v6M213 901.5h6M216.5 898v6M238 901.5h6M241.5 898v6M262 901.5h6M265.5 898v6M287 901.5h6M290.5 898v6M312 901.5h6M315.5 898v6M337 901.5h6M340.5 898v6M362 901.5h6M365.5 898v6M387 901.5h6M390.5 898v6M412 901.5h6M415.5 898v6M437 901.5h6M440.5 898v6M462 901.5h6M465.5 898v6M487 901.5h6M490.5 898v6M512 901.5h6M515.5 898v6M537 901.5h6M540.5 898v6M562 901.5h6M565.5 898v6M587 901.5h6M590.5 898v6M611 901.5h6M614.5 898v6M636 901.5h6M639.5 898v6M661 901.5h6M664.5 898v6M686 901.5h6M689.5 898v6M711 901.5h6M714.5 898v6M736 901.5h6M739.5 898v6M761 901.5h6M764.5 898v6M786 901.5h6M789.5 898v6M811 901.5h6M814.5 898v6M836 901.5h6M839.5 898v6M861 901.5h6M864.5 898v6M886 901.5h6M889.5 898v6M911 901.5h6M914.5 898v6M936 901.5h6M939.5 898v6M960 901.5h6M963.5 898v6M985 901.5h6M988.5 898v6M1010 901.5h6M1013.5 898v6M1035 901.5h6M1038.5 898v6M1060 901.5h6M1063.5 898v6M1085 901.5h6M1088.5 898v6M1110 901.5h6M1113.5 898v6M1135 901.5h6M1138.5 898v6M1160 901.5h6M1163.5 898v6M63 926.5h6M66.5 923v6M88 926.5h6M91.5 923v6M113 926.5h6M116.5 923v6M138 926.5h6M141.5 923v6M163 926.5h6M166.5 923v6M188 926.5h6M191.5 923v6M213 926.5h6M216.5 923v6M238 926.5h6M241.5 923v6M262 926.5h6M265.5 923v6M287 926.5h6M290.5 923v6M312 926.5h6M315.5 923v6M337 926.5h6M340.5 923v6M362 926.5h6M365.5 923v6M387 926.5h6M390.5 923v6M412 926.5h6M415.5 923v6M437 926.5h6M440.5 923v6M462 926.5h6M465.5 923v6M487 926.5h6M490.5 923v6M512 926.5h6M515.5 923v6M537 926.5h6M540.5 923v6M562 926.5h6M565.5 923v6M587 926.5h6M590.5 923v6M611 926.5h6M614.5 923v6M636 926.5h6M639.5 923v6M661 926.5h6M664.5 923v6M686 926.5h6M689.5 923v6M711 926.5h6M714.5 923v6M736 926.5h6M739.5 923v6M761 926.5h6M764.5 923v6M786 926.5h6M789.5 923v6M811 926.5h6M814.5 923v6M836 926.5h6M839.5 923v6M861 926.5h6M864.5 923v6M886 926.5h6M889.5 923v6M911 926.5h6M914.5 923v6M936 926.5h6M939.5 923v6M960 926.5h6M963.5 923v6M985 926.5h6M988.5 923v6M1010 926.5h6M1013.5 923v6M1035 926.5h6M1038.5 923v6M1060 926.5h6M1063.5 923v6M1085 926.5h6M1088.5 923v6M1110 926.5h6M1113.5 923v6M1135 926.5h6M1138.5 923v6M1160 926.5h6M1163.5 923v6M63 951.5h6M66.5 948v6M88 951.5h6M91.5 948v6M113 951.5h6M116.5 948v6M138 951.5h6M141.5 948v6M163 951.5h6M166.5 948v6M188 951.5h6M191.5 948v6M213 951.5h6M216.5 948v6M238 951.5h6M241.5 948v6M262 951.5h6M265.5 948v6M287 951.5h6M290.5 948v6M312 951.5h6M315.5 948v6M337 951.5h6M340.5 948v6M362 951.5h6M365.5 948v6M387 951.5h6M390.5 948v6M412 951.5h6M415.5 948v6M437 951.5h6M440.5 948v6M462 951.5h6M465.5 948v6M487 951.5h6M490.5 948v6M512 951.5h6M515.5 948v6M537 951.5h6M540.5 948v6M562 951.5h6M565.5 948v6M587 951.5h6M590.5 948v6M611 951.5h6M614.5 948v6M636 951.5h6M639.5 948v6M661 951.5h6M664.5 948v6M686 951.5h6M689.5 948v6M711 951.5h6M714.5 948v6M736 951.5h6M739.5 948v6M761 951.5h6M764.5 948v6M786 951.5h6M789.5 948v6M811 951.5h6M814.5 948v6M836 951.5h6M839.5 948v6M861 951.5h6M864.5 948v6M886 951.5h6M889.5 948v6M911 951.5h6M914.5 948v6M936 951.5h6M939.5 948v6M960 951.5h6M963.5 948v6M985 951.5h6M988.5 948v6M1010 951.5h6M1013.5 948v6M1035 951.5h6M1038.5 948v6M1060 951.5h6M1063.5 948v6M1085 951.5h6M1088.5 948v6M1110 951.5h6M1113.5 948v6M1135 951.5h6M1138.5 948v6M1160 951.5h6M1163.5 948v6M63 976.5h6M66.5 973v6M88 976.5h6M91.5 973v6M113 976.5h6M116.5 973v6M138 976.5h6M141.5 973v6M163 976.5h6M166.5 973v6M188 976.5h6M191.5 973v6M213 976.5h6M216.5 973v6M238 976.5h6M241.5 973v6M262 976.5h6M265.5 973v6M287 976.5h6M290.5 973v6M312 976.5h6M315.5 973v6M337 976.5h6M340.5 973v6M362 976.5h6M365.5 973v6M387 976.5h6M390.5 973v6M412 976.5h6M415.5 973v6M437 976.5h6M440.5 973v6M462 976.5h6M465.5 973v6M487 976.5h6M490.5 973v6M512 976.5h6M515.5 973v6M537 976.5h6M540.5 973v6M562 976.5h6M565.5 973v6M587 976.5h6M590.5 973v6M611 976.5h6M614.5 973v6M636 976.5h6M639.5 973v6M661 976.5h6M664.5 973v6M686 976.5h6M689.5 973v6M711 976.5h6M714.5 973v6M736 976.5h6M739.5 973v6M761 976.5h6M764.5 973v6M786 976.5h6M789.5 973v6M811 976.5h6M814.5 973v6M836 976.5h6M839.5 973v6M861 976.5h6M864.5 973v6M886 976.5h6M889.5 973v6M911 976.5h6M914.5 973v6M936 976.5h6M939.5 973v6M960 976.5h6M963.5 973v6M985 976.5h6M988.5 973v6M1010 976.5h6M1013.5 973v6M1035 976.5h6M1038.5 973v6M1060 976.5h6M1063.5 973v6M1085 976.5h6M1088.5 973v6M1110 976.5h6M1113.5 973v6M1135 976.5h6M1138.5 973v6M1160 976.5h6M1163.5 973v6" stroke="#cccccc" stroke-width="1" fill="none" clip-path="url(#gc)"/>
<path d="M66 128.5H91" stroke="#aaa" stroke-width="1"/><path d="M91.5 128.5H1173.5V990M91.5 128.5V990M91.5 158.5H1173.5M440.5 128.5V158.5" fill="none" stroke="#000" stroke-width="1"/><path d="M917.5 128.5V990" stroke="#000" stroke-width="1"/><path d="M1017.5 128.5V990" stroke="#000" stroke-width="1"/><path d="M1102.5 128.5V990" stroke="#000" stroke-width="1"/>
<path d="M228.5 215.7V253.1" fill="none" stroke="#000" stroke-width="1"/><path d="M228.5 315.4V365.2" fill="none" stroke="#000" stroke-width="1"/><path d="M228.5 427.6V602.1" fill="none" stroke="#000" stroke-width="1"/><path d="M228.5 664.4V714.3" fill="none" stroke="#000" stroke-width="1"/><path d="M290.8 633.5H343.5Q353.5 633.5 353.5 623.5V587.1" fill="none" stroke="#000" stroke-width="1"/><path d="M353.5 514.8V294.5Q353.5 284.5 343.5 284.5H300.8" fill="none" stroke="#000" stroke-width="1"/><path d="M290.8 745.5H343.5Q353.5 745.5 353.5 755.5V816.4" fill="none" stroke="#000" stroke-width="1"/><path d="M228.5 776.6V966.0" fill="none" stroke="#000" stroke-width="1"/><path d="M353.5 888.8V927.5Q353.5 937.5 343.5 937.5H238.5Q228.5 937.5 228.5 947.5" fill="none" stroke="#000" stroke-width="1"/><path d="M353.5 578.1L360.0 588.1L347.0 588.1Z" fill="#000" stroke="#000" stroke-width="1" stroke-linejoin="miter"/><path d="M291.8 284.5L301.8 278.0L301.8 291.0Z" fill="#000" stroke="#000" stroke-width="1" stroke-linejoin="miter"/><path d="M353.5 825.9L360.0 815.9L347.0 815.9Z" fill="#000" stroke="#000" stroke-width="1" stroke-linejoin="miter"/><path d="M228.5 975.5L235.0 965.5L222.0 965.5Z" fill="#000" stroke="#000" stroke-width="1" stroke-linejoin="miter"/>
<rect x="166.5" y="178.5" width="124.0" height="37.0" rx="15" ry="15" fill="#cccccc" stroke="#000" stroke-width="1" filter="url(#sh)"/><rect x="166.5" y="253.5" width="124.0" height="62.0" fill="#fff" stroke="#000" stroke-width="1" filter="url(#sh)"/><rect x="290.5" y="514.5" width="125.0" height="63.0" fill="#fff" stroke="#000" stroke-width="1" filter="url(#sh)"/><rect x="290.5" y="826.5" width="125.0" height="62.0" fill="#fff" stroke="#000" stroke-width="1" filter="url(#sh)"/><rect x="166.5" y="976.5" width="124.0" height="62.0" fill="#fff" stroke="#000" stroke-width="1" filter="url(#sh)"/><path d="M186.3 365.2H270.6L290.8 396.4L270.6 427.6H186.3L166.1 396.4Z" fill="#fff" stroke="#000" stroke-width="1.1" filter="url(#sh)"/><path d="M228.4 602.1L290.8 633.2L228.4 664.4L166.1 633.2Z" fill="#fff" stroke="#000" stroke-width="1.1" filter="url(#sh)"/><path d="M228.4 714.3L290.8 745.4L228.4 776.6L166.1 745.4Z" fill="#fff" stroke="#000" stroke-width="1.1" filter="url(#sh)"/>
<rect x="166.5" y="365.5" width="124" height="62" fill="none" stroke="#444" stroke-width="1" stroke-dasharray="5 3"/>
<circle cx="166.1" cy="365.2" r="5.4" fill="#fff" stroke="#8a8a8a" stroke-width="1"/><circle cx="166.1" cy="365.2" r="3.4" fill="#8ab2ec"/><circle cx="166.1" cy="396.4" r="5.4" fill="#fff" stroke="#8a8a8a" stroke-width="1"/><circle cx="166.1" cy="396.4" r="3.4" fill="#8ab2ec"/><circle cx="166.1" cy="427.6" r="5.4" fill="#fff" stroke="#8a8a8a" stroke-width="1"/><circle cx="166.1" cy="427.6" r="3.4" fill="#8ab2ec"/><circle cx="228.4" cy="365.2" r="5.4" fill="#fff" stroke="#8a8a8a" stroke-width="1"/><circle cx="228.4" cy="365.2" r="3.4" fill="#8ab2ec"/><circle cx="228.4" cy="427.6" r="5.4" fill="#fff" stroke="#8a8a8a" stroke-width="1"/><circle cx="228.4" cy="427.6" r="3.4" fill="#8ab2ec"/><circle cx="290.8" cy="365.2" r="5.4" fill="#fff" stroke="#8a8a8a" stroke-width="1"/><circle cx="290.8" cy="365.2" r="3.4" fill="#8ab2ec"/><circle cx="290.8" cy="396.4" r="5.4" fill="#fff" stroke="#8a8a8a" stroke-width="1"/><circle cx="290.8" cy="396.4" r="3.4" fill="#8ab2ec"/><circle cx="290.8" cy="427.6" r="5.4" fill="#fff" stroke="#8a8a8a" stroke-width="1"/><circle cx="290.8" cy="427.6" r="3.4" fill="#8ab2ec"/>
<g font-family="Liberation Sans, sans-serif" font-size="14"><text x="99.3" y="149.6" text-anchor="start" fill="#111">Ablauf</text><text x="448.4" y="149.6" text-anchor="start" fill="#111">Beschreibung</text><text x="925.4" y="149.6" text-anchor="start" fill="#111">Verant.</text><text x="1025.4" y="149.6" text-anchor="start" fill="#111">Hilfsmittel</text><text x="1110.4" y="149.6" text-anchor="start" fill="#111">Risiken</text><text x="228.5" y="203" text-anchor="middle" fill="#111">Start</text><text x="228.5" y="282.9" text-anchor="middle" fill="#111">Rechnungen</text><text x="228.5" y="298" text-anchor="middle" fill="#111">sammeln</text><text x="228.5" y="394.4" text-anchor="middle" fill="#111">Rechng. formal</text><text x="228.5" y="410.6" text-anchor="middle" fill="#111">prüfen</text><text x="353" y="544.2" text-anchor="middle" fill="#111">Lieferant um</text><text x="353" y="559.6" text-anchor="middle" fill="#111">Korrektur bitten</text><text x="229.6" y="640.6" text-anchor="middle" fill="#111">?</text><text x="229.6" y="752.5" text-anchor="middle" fill="#111">?</text><text x="351.5" y="856.2" text-anchor="middle" fill="#111">Lieferant</text><text x="353" y="872.4" text-anchor="middle" fill="#111">anlegen</text><text x="306.6" y="654.6" text-anchor="start" fill="#111">Nein</text><text x="243.6" y="689.1" text-anchor="start" fill="#111">Ja</text><text x="306.6" y="766.8" text-anchor="start" fill="#111">Nein</text><text x="243.6" y="801.2" text-anchor="start" fill="#111">Ja</text><text x="448.4" y="266.9" text-anchor="start" fill="#111">Alle eingehenden (ungeprüften) Rechnungen werden in der Buchhaltung</text><text x="448.4" y="282.9" text-anchor="start" fill="#111">zur Ersterfassung gesammelt</text><text x="925.4" y="266.9" text-anchor="start" fill="#111">Buchhaltung</text><text x="925.4" y="282.9" text-anchor="start" fill="#111">&amp; Kasse</text><text x="448.4" y="378.9" text-anchor="start" fill="#111">Alle eingehenden (ungeprüften) Rechnungen werden in der Buchhaltung</text><text x="448.4" y="394.9" text-anchor="start" fill="#111">zur Ersterfassung gesammelt</text><text x="925.4" y="378.8" text-anchor="start" fill="#111">B&amp;K</text><text x="1025.4" y="378.8" text-anchor="start" fill="#2a2aee">CL3.1-21</text><text x="1110.4" y="378.8" text-anchor="start" fill="#2a2aee">R1.3-10</text><text x="1110.4" y="395.8" text-anchor="start" fill="#2a2aee">R1.3-20</text><text x="925.4" y="528.9" text-anchor="start" fill="#111">B&amp;K</text><text x="448.4" y="550.5" text-anchor="start" fill="#111">Lieferant um Korrektur der Rechnung bitten</text><text x="925.4" y="615.8" text-anchor="start" fill="#111">B&amp;K</text><text x="448.4" y="637.8" text-anchor="start" fill="#111">Rechnung formal korrekt?</text><text x="925.4" y="728.1" text-anchor="start" fill="#111">B&amp;K</text><text x="448.4" y="750.5" text-anchor="start" fill="#111">Prüfen: Lieferant schon im Stamm vorhanden?</text><text x="448.4" y="839.8" text-anchor="start" fill="#111">Lieferant in der Stammdatenbank (Kreditoren/Lieferanten) anlegen</text><text x="925.4" y="839.8" text-anchor="start" fill="#111">B&amp;K</text></g>
</g>
</svg>
<!-- canvas scrollbars -->
<div class="abs vsb" style="left:1224px;top:103px;width:17px;height:877px"></div>
<div class="abs" style="left:1224px;top:103px;width:17px;height:17px;background:#eee"></div>
<svg class="abs" style="left:1224px;top:103px" width="17" height="17"><path d="M5.5 11.2H11.2L8.35 6.2Z" fill="#777"/></svg>
<div class="abs" style="left:1227px;top:120px;width:12px;height:306px;background:#c8c8c8"></div>
<div class="abs" style="left:1224px;top:964px;width:17px;height:16px;background:#eee"></div>
<svg class="abs" style="left:1224px;top:964px" width="17" height="16"><path d="M5.7 5H11.2L8.45 9.5Z" fill="#777"/></svg>
<div class="abs vsb" style="left:66px;top:980px;width:1158px;height:10px"></div>
<div class="abs" style="left:66px;top:980px;width:17px;height:10px;background:#eee"></div>
<svg class="abs" style="left:66px;top:980px" width="17" height="10"><path d="M7 10L11 6V10Z" fill="#777"/></svg>
<div class="abs" style="left:626px;top:983px;width:582px;height:7px;background:#c8c8c8"></div>
<div class="abs" style="left:1208px;top:980px;width:16px;height:10px;background:#eee"></div>
<svg class="abs" style="left:1208px;top:980px" width="16" height="10"><path d="M6 5L10 8L6 10Z" fill="#777"/></svg>
<div class="abs" style="left:1224px;top:980px;width:17px;height:10px;background:#f1f1f1"></div>
<div id="panel" class="abs"></div>
<div class="abs" style="left:1254px;top:106px;width:397px;height:31px;background:linear-gradient(#3384d0,#4195dd)"></div>
<div class="abs" style="left:1263.6px;top:108.5px;font-size:20.5px;line-height:24px;color:#fff;white-space:nowrap;transform-origin:0 0;transform:scaleX(0.893)">Eigenschaften</div>
<!-- inner scrollbar -->
<div class="abs" style="left:1633px;top:138px;width:17px;height:849px;background:#f1f1f1"></div>
<div class="abs" style="left:1633px;top:138px;width:17px;height:17px;background:#eee"></div>
<svg class="abs" style="left:1633px;top:138px" width="17" height="17"><path d="M4.5 11.5H12.5L8.5 7Z" fill="#a3a3a3"/></svg>
<div class="abs" style="left:1635px;top:155px;width:13px;height:583px;background:#c1c1c1"></div>
<svg class="abs" style="left:1633px;top:970px" width="17" height="17"><path d="M4 5.5H12L8 10Z" fill="#505050"/></svg>
<!-- LABEL -->
<div class="sect" style="left:1265.5px;top:152px">LABEL</div>
<div class="abs" style="left:1265px;top:167px;width:359px;height:31px;box-sizing:border-box;border:1px solid #6d9fe6;box-shadow:inset 0 0 0 1px #a9c9f6;border-radius:2px;background:#fff"></div>
<div class="abs" style="left:1274.5px;top:175px;font-size:12px;line-height:15px;color:#333;white-space:nowrap;transform-origin:0 0;transform:scaleX(0.965)">Rechng. formal prüfen</div>
<div class="abs" style="left:1389px;top:174px;width:1px;height:15px;background:#000"></div>
<svg class="abs" style="left:1610px;top:185px" width="12" height="12" stroke="#777" stroke-width="1"><path d="M2 10L10 2M6 10L10 6"/></svg>
<div class="abs" style="left:1265px;top:250px;width:358px;height:1px;background:#e6e6e6"></div>
<!-- BESCHREIBUNG -->
<div class="sect" style="left:1265.5px;top:270.5px">BESCHREIBUNG</div>
<div class="abs" style="left:1265px;top:286px;width:360px;height:504px;box-sizing:border-box;border:1px solid #c4c4c4;background:#fff"></div>
<div class="abs" style="left:1266px;top:287px;width:358px;height:74px;background:#f8f8f8;border-bottom:1px solid #d1d1d1"></div>
<div class="abs" style="left:1266px;top:762px;width:358px;height:27px;background:#f8f8f8;border-top:1px solid #d1d1d1;box-sizing:border-box"></div>
<svg class="abs" style="left:1608px;top:773px" width="14" height="14"><path d="M2 12H12V2Z" fill="#999"/></svg>
<svg class="abs" style="left:1266px;top:287px" width="358" height="74" viewBox="1266 287 358 74">
 <g fill="#333" font-family="Liberation Sans, sans-serif">
 <text x="1283" y="313" font-size="16" font-weight="bold">B</text>
 <path d="M1312 301.5H1320.5M1310 312.5H1318.5M1316.3 301.5L1314.2 312.5" stroke="#333" stroke-width="2.2" fill="none"/>
 <text x="1338.5" y="312" font-size="15" font-weight="bold">U</text><rect x="1339" y="313" width="11" height="1.5"/>
 <circle cx="1373" cy="304" r="1.8"/><circle cx="1373" cy="311" r="1.8"/>
 <path d="M1377 302.5H1384M1377 305H1384M1377 309.5H1384M1377 312H1384" stroke="#333" stroke-width="1.2" fill="none"/>
 <path d="M1403.5 302.5H1411M1403.5 305H1411M1403.5 309.5H1411M1403.5 312H1411" stroke="#333" stroke-width="1.2" fill="none"/>
 <path d="M1399.5 302.5L1400.5 302V306M1399 308.5H1401.5V310.5H1399V313.5H1401.5" stroke="#333" stroke-width="0.9" fill="none"/>
 <path d="M1460 301L1465 306M1460 301V305M1460 301H1464M1472.5 301L1467.5 306M1472.5 301V305M1472.5 301H1468.5M1460 313.5L1465 308.5M1460 313.5V309.5M1460 313.5H1464M1472.5 313.5L1467.5 308.5M1472.5 313.5V309.5M1472.5 313.5H1468.5" stroke="#333" stroke-width="1.6" fill="none"/>
 <text x="1280.5" y="343.5" font-size="13" font-weight="bold">A</text>
 <rect x="1280" y="345.5" width="15" height="2" fill="#999"/>
 <path d="M1298 338.5H1304L1301 341.5Z"/>
 <path d="M1319 334H1317V346H1320M1327 334H1329V337" stroke="#333" stroke-width="1.2" fill="none"/><rect x="1320" y="331.5" width="6" height="2.5" rx="1"/><rect x="1321.5" y="338.5" width="8.5" height="8" fill="none" stroke="#333" stroke-width="1.2"/><path d="M1323.5 341H1328M1325.7 341V345" stroke="#333" stroke-width="1" fill="none"/>
 <path d="M1347.5 334H1345.5V346H1348.5M1355.5 334H1357.5V337" stroke="#333" stroke-width="1.2" fill="none"/><rect x="1348.5" y="331.5" width="6" height="2.5" rx="1"/><rect x="1350" y="338.5" width="8.5" height="8" fill="none" stroke="#333" stroke-width="1.2"/><path d="M1351.5 340.5L1352.5 345L1354.2 342L1356 345L1357 340.5" stroke="#333" stroke-width="0.9" fill="none"/>
 <path d="M1374.5 335H1384M1379.8 335L1377.3 346M1372 347H1378.5M1380 341.5L1385 347M1385 341.5L1380 347" stroke="#333" stroke-width="1.7" fill="none"/>
 <path d="M1412 336L1405.5 340.3L1412 344.5Z"/><path d="M1411 340.3C1415 339.5 1418 341 1419 344.5" stroke="#333" stroke-width="2.4" fill="none"/>
 <path d="M1440 336L1446.5 340.3L1440 344.5Z" fill="#c8c8c8"/><path d="M1441 340.3C1437 339.5 1434 341 1433 344.5" stroke="#c8c8c8" stroke-width="2.4" fill="none"/>
 <path d="M1467.5 333.5H1474L1477.8 337.3V346H1467.5Z" fill="none" stroke="#333" stroke-width="1.1"/><path d="M1471.5 338.5L1469.5 340.5L1471.5 342.5M1474 338.5L1476 340.5L1474 342.5" stroke="#333" stroke-width="1" fill="none"/>
 <text x="1484.2" y="344" font-size="12">Quellcode</text>
 </g>
 <path d="M1360.5 298V316M1421.5 298V316M1395.5 331V349M1456.5 331V349" stroke="#d0d0d0" stroke-width="1"/>
</svg>
<div class="abs" style="left:1285.8px;top:381.5px;font-size:13px;line-height:20.5px;color:#333;white-space:nowrap">Alle eingehenden (ungeprüften) Rechnungen werden<br>in der Buchhaltung zur Ersterfassung gesammelt</div>
<!-- HILFMITTEL -->
<div class="abs" style="left:1265px;top:838px;width:358px;height:1px;background:#e6e6e6"></div>
<div class="sect" style="left:1265.5px;top:865px">HILFMITTEL</div>
<div class="abs" style="left:1562px;top:854px;width:27px;height:26px;background:#3384d0"></div>
<div class="abs" style="left:1593px;top:854px;width:30px;height:27px;background:#3888d4"></div>
<svg class="abs" style="left:1562px;top:854px" width="61" height="27" stroke="#fff" fill="none"><path d="M9.5 13.5H17.5M13.5 9.5V17.5" stroke-width="1.6"/><path d="M49.5 9.5V16.5H42M44.5 14L42 16.5L44.5 19" stroke-width="1.4"/></svg>
<div class="abs" style="left:1265px;top:889px;width:372px;height:43px;box-sizing:border-box;border:1px solid #dcdcdc;border-radius:4px;background:#f3f4f6"></div>
<div class="abs" style="left:1633px;top:889px;width:17px;height:44px;background:#f1f1f1"></div>
<svg class="abs" style="left:1274px;top:897px" width="16" height="20" fill="#222"><rect x="1.5" y="3" width="13" height="2"/><rect x="5" y="1" width="6" height="2.5" rx="1"/><path d="M2.5 5.5H13.5L12.5 18H3.5Z"/><path d="M6 7.5V16M8 7.5V16M10 7.5V16" stroke="#f3f4f6" stroke-width="0.9"/></svg>
<div class="abs" style="left:1298.3px;top:900px;font-size:16px;line-height:19px;color:#333;white-space:nowrap;transform-origin:0 0;transform:scaleX(0.887)">CL3.1-21 [Checkliste Rechnungsprüfung]</div>
<div class="abs" style="left:1265px;top:960px;width:358px;height:1px;background:#e6e6e6"></div>
<div class="abs" style="left:1562px;top:976px;width:27px;height:11px;background:#3384d0"></div>
<div class="abs" style="left:1593px;top:976px;width:30px;height:11px;background:#3888d4"></div>

</body></html>
